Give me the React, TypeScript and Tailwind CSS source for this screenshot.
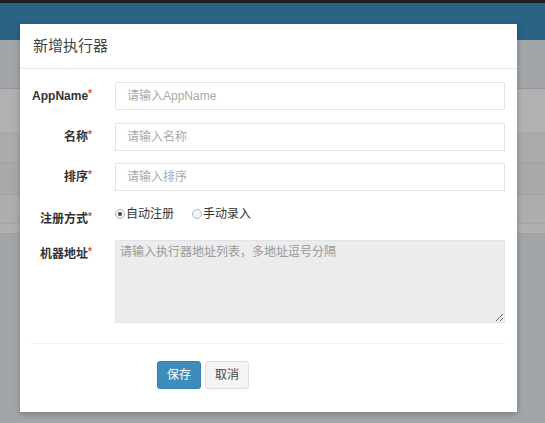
import React from "react";

const font = { fontFamily: '"Liberation Sans", "Noto Sans CJK SC", sans-serif' };

function Req() {
  return <span className="text-[#dd4b39] text-[10px] relative -top-[3px] font-bold">*</span>;
}

function Radio({ checked, label }: { checked?: boolean; label: string }) {
  return (
    <label className="flex items-center text-[12px] text-[#333] leading-[18px]">
      <span className="w-[10px] h-[10px] rounded-full border border-[#b5b5b5] bg-[#f3f3f3] flex items-center justify-center mr-[1px]">
        {checked && <span className="w-[4px] h-[4px] rounded-full bg-[#444]" />}
      </span>
      {label}
    </label>
  );
}

export default function App() {
  return (
    <div className="relative w-[545px] h-[423px] overflow-hidden bg-[#a3a6a9]" style={font}>
      {/* background page (dimmed by backdrop) */}
      <div className="h-[3px] bg-[#1e1f20]" />
      <div className="h-[37px] bg-[#2a6384]" />
      <div className="h-[48px] bg-[#a3a6a9]" />
      <div className="border-t border-[#939598]">
        <div className="h-[44px] bg-[#b1b1b1] border-b border-[#a6a6a6]" />
        <div className="h-[30px] bg-[#ababab] border-b border-[#a3a3a3]" />
        <div className="h-[32px] bg-[#a8a8a8] border-b border-[#a3a3a3]" />
        <div className="h-[29px] bg-[#adadad] border-b border-[#a5a5a5]" />
        <div className="h-[10px] bg-[#b0b0b0] border-b border-[#9c9ea0]" />
      </div>

      {/* modal */}
      <div className="absolute left-[20px] top-[24px] w-[497px] h-[388px] bg-white shadow-[0_2px_6px_rgba(0,0,0,0.25)] flex flex-col">
        <div className="h-[45px] flex items-center px-[13px] border-b border-[#ebebeb]">
          <span className="text-[15px] text-[#444]">新增执行器</span>
        </div>

        <div className="pt-[13px] flex flex-col">
          <div className="flex items-center h-[28px] mb-[13px]">
            <div className="w-[72px] text-right text-[12px] font-bold text-[#333]">
              AppName<Req />
            </div>
            <input
              className="ml-[23px] w-[390px] h-[28px] border border-[#e3e3e6] px-[11px] text-[12px] outline-none placeholder:text-[#aaa]"
              placeholder="请输入AppName"
              style={font}
            />
          </div>
          <div className="flex items-center h-[28px] mb-[12px]">
            <div className="w-[72px] text-right text-[12px] font-bold text-[#333]">
              名称<Req />
            </div>
            <input
              className="ml-[23px] w-[390px] h-[28px] border border-[#e3e3e6] px-[11px] text-[12px] outline-none placeholder:text-[#aaa]"
              placeholder="请输入名称"
              style={font}
            />
          </div>
          <div className="flex items-center h-[28px] mb-[13px]">
            <div className="w-[72px] text-right text-[12px] font-bold text-[#333]">
              排序<Req />
            </div>
            <input
              className="ml-[23px] w-[390px] h-[28px] border border-[#e3e3e6] px-[11px] text-[12px] outline-none placeholder:text-[#aaa]"
              placeholder="请输入排序"
              style={font}
            />
          </div>
          <div className="flex items-start mb-[13px]">
            <div className="w-[72px] pt-[8px] text-right text-[12px] leading-[14px] font-bold text-[#333]">
              注册方式<Req />
            </div>
            <div className="ml-[23px] pt-[1px] flex items-center gap-[18px]">
              <Radio checked label="自动注册" />
              <Radio label="手动录入" />
            </div>
          </div>
          <div className="flex items-start">
            <div className="w-[72px] pt-[7px] text-right text-[12px] leading-[14px] font-bold text-[#333]">
              机器地址<Req />
            </div>
            <textarea
              disabled
              className="ml-[23px] w-[390px] h-[83px] border border-[#e3e3e6] bg-[#ececec] px-[4px] py-[3px] text-[12px] leading-[16px] outline-none placeholder:text-[#999]"
              placeholder="请输入执行器地址列表，多地址逗号分隔"
              style={{ ...font, resize: "both" }}
            />
          </div>
        </div>

        <div className="mt-[20px] ml-[11px] mr-[12px] border-t border-[#f0f0f0]" />

        <div className="mt-[17px] ml-[137px] flex gap-[4px]">
          <button className="w-[44px] h-[28px] rounded-[3px] bg-[#3c8dbc] border border-[#367fa9] text-white text-[12px]" style={font}>
            保存
          </button>
          <button className="w-[44px] h-[28px] rounded-[3px] bg-[#f4f4f4] border border-[#e0e0e0] text-[#444] text-[12px]" style={font}>
            取消
          </button>
        </div>
      </div>
    </div>
  );
}
